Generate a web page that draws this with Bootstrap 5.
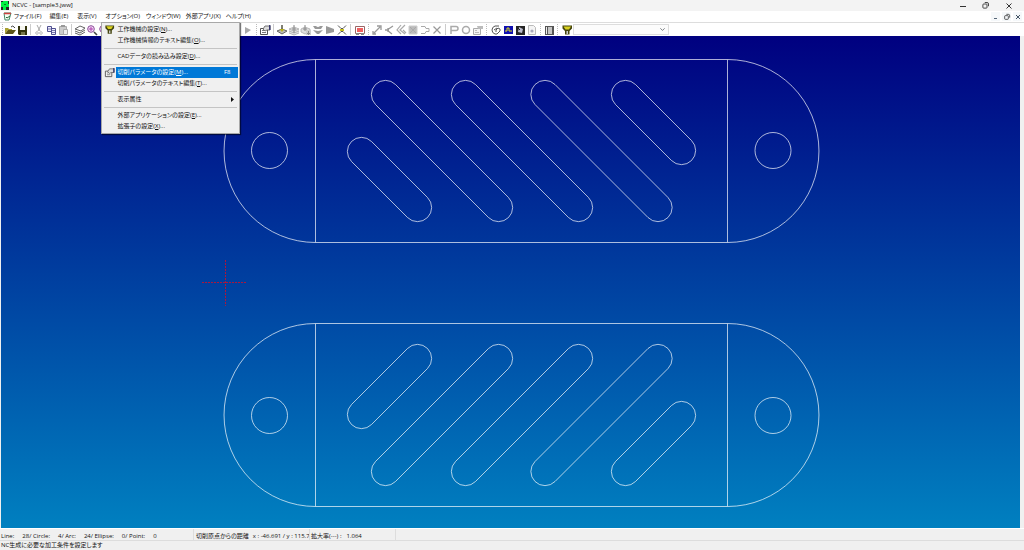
<!DOCTYPE html>
<html lang="ja">
<head>
<meta charset="utf-8">
<meta name="viewport" content="width=device-width, initial-scale=1">
<title>NCVC - [sample3.jww]</title>
<link href="https://cdn.jsdelivr.net/npm/bootstrap@5.3.0/dist/css/bootstrap.min.css" rel="stylesheet">
<style>
body{font-family:"Open Sans","Noto Sans CJK JP",sans-serif;font-size:6px;line-height:11px;color:#111;background:#f0f0f0;font-feature-settings:"palt";white-space:nowrap}
button{background:none;border:0;color:inherit;font:inherit;font-feature-settings:inherit;padding:0}
svg{display:block}
.ico{width:12px;height:12px;flex:none}
.titlebar{background:#f3f3f3;height:11px}
.caption-btn{width:23px;height:11px;display:flex;align-items:center;justify-content:center}
.menubar{background:#fff;height:12px;border-bottom:1px solid #ddd}
.menu-top{padding:0 4px 0 5px;height:11px}
.menu-tight{padding:0 3px 0 2px}
.mdi-btn{width:9px;height:9px;margin-right:2px;display:flex;align-items:center;justify-content:center;background:#f5f8fa}
.toolbar-row{background:#fff;height:13px;color:#999}
.tool{width:12px;height:12px;display:block;flex:none}
.sep,.grip{width:5px;height:11px;flex:none;background:linear-gradient(#ccc,#ccc) 2px 0/1px 100% no-repeat}
.grip{background:repeating-linear-gradient(#bbb 0 1px,#fff0 1px 2px) 2px 0/1px 100% no-repeat}
.first{width:4px}
.wide{width:6px}
.combo{width:96px;height:11px;min-height:0;padding:0 12px 0 2px;border:1px solid #ddd;border-radius:0;font-size:6px;line-height:9px;background-color:#fcfcfc;background-size:7px 5px;background-position:right 2px center}
.app-menu{left:1px;top:11px;width:139px;min-width:0;padding:1px;border:1px solid #a8a8a8;border-radius:0;background:#f0f0f0;box-shadow:1px 1px 1px #0008;font-size:6px;line-height:11px;color:#111;margin:0}
.app-menu .dropdown-item{display:flex;align-items:center;height:11px;padding:0 7px 0 0;color:#111;line-height:11px}
.app-menu .glyph{width:13px;height:11px;flex:none}
.app-menu .caption{flex:1;padding-left:1px;height:11px;display:flex;align-items:center}
.app-menu .chosen{padding-right:0}
.app-menu .chosen .caption{background:#0078d7;color:#fff;padding-right:8px}
.app-menu .dropdown-divider{margin:2px 1px;border-top:1px solid #c4c4c4}
.workarea{padding:0 4px 0 1px;min-height:0}
.drawing{background:linear-gradient(#000080,#0080c0);width:100%;height:100%}
.plate{fill:none;stroke:#fff;stroke-opacity:.68;stroke-width:1}
.status{height:13px;border-top:1px solid #fff;border-bottom:1px solid #ddd}
.status>div{padding-top:2px;line-height:10px;border-right:1px solid #ddd;overflow:hidden}
.pane-count{width:194px;padding-left:1px;gap:8px}
.pane-pos{width:116px;padding-left:2px;gap:4px}
.pane-zoom{width:86px;padding-left:1px;gap:5px}
.message{height:9px;line-height:9px;padding-left:1px}
</style>
</head>
<body>
<svg width="0" height="0" class="position-absolute" aria-hidden="true">
<symbol id="i-open" viewBox="0 0 12 12"><path d="M1 4h3l1 1h3v1H4l-3 4z" fill="#a8a030"/><path d="M4 6h8l-3 4H1z" fill="#5b5418"/><path d="M7 3q2-2 3 0l1 1" fill="none" stroke="#444"/></symbol>
<symbol id="i-save" viewBox="0 0 12 12"><path d="M2 2h9v9H3l-1-1z" fill="#33330c"/><path d="M4 2h5v4H4z" fill="#f6f6f0"/><path d="M5 8h4v3H5z" fill="#77774b"/></symbol>
<symbol id="i-cut" viewBox="0 0 12 12"><path d="M4 1l3 6M8 1L5 7" stroke="#aaa" fill="none"/><circle cx="4" cy="9" r="1.3" fill="none" stroke="#bbb"/><circle cx="8" cy="9" r="1.3" fill="none" stroke="#bbb"/></symbol>
<symbol id="i-copy" viewBox="0 0 12 12"><path d="M2.500 2.500h4v5h-4zM6.500 4.500h4v6h-4z" fill="#eef" stroke="#505090"/><path d="M3 5h3M7 6.500h3M7 8.500h3" stroke="#7777aa"/></symbol>
<symbol id="i-paste" viewBox="0 0 12 12"><path d="M2.500 2.500h7v8h-7z" fill="#ccc" stroke="#aaa"/><path d="M4 1h4v2H4z" fill="#999"/><path d="M6.500 5.500h4v5h-4z" fill="#eee" stroke="#aaa"/></symbol>
<symbol id="i-layers" viewBox="0 0 12 12"><path d="M1 5l5-3 5 2-4 3zM1 7l5 2 5-3M1 9l5 2 5-3" fill="none" stroke="#666"/></symbol>
<symbol id="i-zoom" viewBox="0 0 12 12"><circle cx="5" cy="5" r="3.3" fill="#f5e0f8" stroke="#8a4a98"/><path d="M3 5h4M5 3v4" stroke="#b040b0"/><path d="M8 8l3 3" stroke="#444" stroke-width="1.6"/></symbol>
<symbol id="i-play" viewBox="0 0 12 12"><path d="M3 3l6 3-6 4z" fill="#aaa"/></symbol>
<symbol id="i-prop" viewBox="0 0 12 12"><path d="M1.500 4.500h7v6h-7z" fill="#fff" stroke="#555"/><path d="M3 6.500h2M3 8.500h4" stroke="#777"/><path d="M4 5l2-3h5v4H8L6 7z" fill="#ddd" stroke="#555" stroke-width=".8"/><path d="M10 1h1.500v5H10z" fill="#3a3a70"/></symbol>
<symbol id="i-propg" viewBox="0 0 12 12"><path d="M1.500 4.500h7v6h-7z" fill="#f4f4f4" stroke="#aaa"/><path d="M3 6.500h2M3 8.500h4" stroke="#bbb"/><path d="M5 2h6v3H6z" fill="#bbb"/></symbol>
<symbol id="i-gen" viewBox="0 0 12 12"><path d="M1 7l5-2 5 2-5 3z" fill="#bbb" stroke="#666"/><path d="M6 1v6" stroke="#554" stroke-width="1.500"/><path d="M3.500 5h5L6 8z" fill="#b8b020"/></symbol>
<symbol id="i-geng" viewBox="0 0 12 12"><path d="M1 5l5-2 5 2v4l-5 2-5-2z" fill="#e4e4e4"/><path d="M1 5l5-2 5 2-5 2zM1 7l5 2 5-2M1 9l5 2 5-2" fill="none" stroke="#aaa" stroke-width=".8"/><path d="M6 1v8M4 5h4" stroke="#888"/></symbol>
<symbol id="i-gend" viewBox="0 0 12 12"><path d="M1 5l4-2 5 2v3l-5 2-4-2z" fill="#ddd" stroke="#aaa" stroke-width=".8"/><path d="M5 1v6M3 5h4" stroke="#888"/><path d="M6 6h5v5H6z" fill="#ccc"/><path d="M7 9.500h3M8.500 7v4" stroke="#888"/></symbol>
<symbol id="i-curve" viewBox="0 0 12 12"><path d="M1 2h3q2 2 4 0h3L9 5H3zM1 6l5 1 5-1-4 4H5z" fill="#999"/></symbol>
<symbol id="i-flag" viewBox="0 0 12 12"><path d="M2 2l8 3v3l-8 2z" fill="#999"/></symbol>
<symbol id="i-cross" viewBox="0 0 12 12"><path d="M2 1.500l3 3h2l3-3M2 10.500l3-3h2l3 3" fill="none" stroke="#555"/><path d="M4 5h4v2H4z" fill="#c8c020"/></symbol>
<symbol id="i-mon" viewBox="0 0 12 12"><path d="M1.500 2.500h9v7h-9z" fill="#fff" stroke="#966"/><path d="M3 4h6v4H3z" fill="#f06060"/><path d="M2 9h3v2H2zM7 9h3v2H7z" fill="#888"/></symbol>
<symbol id="i-arrow" viewBox="0 0 12 12"><path d="M3 9l6-6M6 2h4v4M2 7v3h3" fill="none" stroke="#999" stroke-width="1.300"/></symbol>
<symbol id="i-lt" viewBox="0 0 12 12"><path d="M10 2L4 6l5 4M2 6h4M5 4v4" fill="none" stroke="#999" stroke-width="1.300"/></symbol>
<symbol id="i-llt" viewBox="0 0 12 12"><path d="M6 1L2 6l4 4M10 1L5 6l5 4M8 6l3 3" fill="none" stroke="#aaa" stroke-width="1.200"/></symbol>
<symbol id="i-sq" viewBox="0 0 12 12"><path d="M2 2h8v8H2z" fill="#bbb" stroke="#ccc"/><path d="M3 3l6 6M9 3L3 9" stroke="#aaa"/></symbol>
<symbol id="i-loop" viewBox="0 0 12 12"><path d="M2 2.500h4l1 2h3v3H7l-1 2H2" fill="none" stroke="#aaa"/></symbol>
<symbol id="i-x" viewBox="0 0 12 12"><path d="M2.500 2.500l7 7M9.500 2.500l-7 7" stroke="#999" stroke-width="1.200"/></symbol>
<symbol id="i-p" viewBox="0 0 12 12"><path d="M3 10V2.500h5q2 0 2 2t-2 2H3" fill="none" stroke="#aaa" stroke-width="1.500"/></symbol>
<symbol id="i-o" viewBox="0 0 12 12"><circle cx="6" cy="6" r="3.500" fill="none" stroke="#aaa" stroke-width="1.500"/></symbol>
<symbol id="i-swirl" viewBox="0 0 12 12"><path d="M9 2H5Q2 3 2 6t3 4h2l3-3V5L8 4 6 6v2M4 6l3-2" fill="none" stroke="#555"/></symbol>
<symbol id="i-wave" viewBox="0 0 12 12"><path d="M2 2h9v8H2z" fill="#1010b0"/><path d="M3 7h2V4h2v3h3" fill="none" stroke="#dddd20"/></symbol>
<symbol id="i-dark" viewBox="0 0 12 12"><path d="M2 2h9v9H2z" fill="#252525"/><path d="M5 3l4 2-1 4-4-1z" fill="#bbc"/><path d="M4 4l2 2" stroke="#222"/></symbol>
<symbol id="i-doc" viewBox="0 0 12 12"><path d="M2.500 1.500h5l2 2v7h-7z" fill="#f4f4f4" stroke="#bbb"/><circle cx="6" cy="7" r="1.600" fill="#aab"/></symbol>
<symbol id="i-page" viewBox="0 0 12 12"><path d="M2 2h9v9H2z" fill="#555"/><path d="M3 3h1v7H3z" fill="#eee"/><path d="M5 3h4v7H5z" fill="#c4c4c4"/></symbol>
<symbol id="i-tool" viewBox="0 0 12 12"><path d="M1.500 1.500h9.500v3L8.500 7v3.500H4V7L1.500 4.500z" fill="#44440c"/><path d="M2.500 2.500h7.500L8 5.500H4.500z" fill="#d8d020"/><path d="M5.500 7h1.500v3H5.500z" fill="#ccc"/></symbol>
<symbol id="i-restore" viewBox="0 0 12 12"><rect x="2.500" y="4" width="5.500" height="5.500" rx="1" fill="none" stroke="currentColor"/><path d="M5 2h3q2 0 2 2v3" fill="none" stroke="currentColor"/></symbol>
</svg>
<div class="d-flex flex-column vh-100 overflow-hidden">
<header>
<div class="titlebar d-flex align-items-center">
<svg class="flex-shrink-0" width="12" height="11" viewBox="0 0 12 11"><path d="M1 1h8v6H1zM3 7h4v3H3z" fill="#00f040"/><path d="M1 1h2v1H1zM8 1h1v3H8zM1 7h2v3H1zM6 7h3v3H6z" fill="#222"/><path d="M4 4h2v1H4z" fill="#087820"/></svg>
<span class="flex-grow-1">NCVC - [sample3.jww]</span>
<button class="caption-btn" aria-label="最小化"><svg width="8" height="8"><path d="M1 4.500h6" stroke="#333"/></svg></button>
<button class="caption-btn" aria-label="元に戻す"><svg width="9" height="9"><use href="#i-restore"/></svg></button>
<button class="caption-btn me-1" aria-label="閉じる"><svg width="8" height="8" viewBox="0 0 8 8"><path d="M1.500 1.500l5 5M6.500 1.500l-5 5" stroke="#333"/></svg></button>
</div>
<nav class="menubar d-flex align-items-center">
<svg width="12" height="11" class="flex-shrink-0" viewBox="0 0 12 11"><path d="M4 2h7L9 9H5z" fill="#f4fff4" stroke="#486"/><path d="M4 2.500h7" stroke="#d04040" stroke-width="1.500"/><path d="M6 6l1 1 3-2" stroke="#286a38" fill="none"/></svg>
<button class="menu-top menu-tight">ファイル(F)</button>
<button class="menu-top">編集(E)</button>
<button class="menu-top">表示(V)</button>
<div class="dropdown">
<button class="menu-top d-block" aria-expanded="true">オプション(O)</button>
<div class="dropdown-menu app-menu show">
<button class="dropdown-item"><svg class="glyph"><use href="#i-tool"/></svg><span class="caption">工作機械の設定(<u>N</u>)...</span></button>
<button class="dropdown-item"><span class="glyph"></span><span class="caption">工作機械情報のテキスト編集(<u>O</u>)...</span></button>
<hr class="dropdown-divider">
<button class="dropdown-item"><span class="glyph"></span><span class="caption">CADデータの読み込み設定(<u>D</u>)...</span></button>
<hr class="dropdown-divider">
<button class="dropdown-item chosen"><svg class="glyph"><use href="#i-prop"/></svg><span class="caption">切削パラメータの設定(<u>M</u>)...<span class="ms-auto">F8</span></span></button>
<button class="dropdown-item"><span class="glyph"></span><span class="caption">切削パラメータのテキスト編集(<u>T</u>)...</span></button>
<hr class="dropdown-divider">
<button class="dropdown-item pe-1"><span class="glyph"></span><span class="caption">表示属性</span><svg width="3" height="5"><path d="M0 0l3 2.500-3 2.500z" fill="#111"/></svg></button>
<hr class="dropdown-divider">
<button class="dropdown-item"><span class="glyph"></span><span class="caption">外部アプリケーションの設定(<u>E</u>)...</span></button>
<button class="dropdown-item"><span class="glyph"></span><span class="caption">拡張子の設定(<u>X</u>)...</span></button>
</div>
</div>
<button class="menu-top menu-tight">ウィンドウ(W)</button>
<button class="menu-top menu-tight">外部アプリ(X)</button>
<button class="menu-top menu-tight me-auto">ヘルプ(H)</button>
<button class="mdi-btn" aria-label="子ウィンドウを最小化"><svg width="7" height="7"><path d="M2 5.500h3" stroke="#567"/></svg></button>
<button class="mdi-btn" aria-label="子ウィンドウを元に戻す"><svg width="8" height="8"><use href="#i-restore"/></svg></button>
<button class="mdi-btn" aria-label="子ウィンドウを閉じる"><svg width="6" height="6"><path d="M1 1l4 4M5 1l-4 4" stroke="#456"/></svg></button>
</nav>
<div class="toolbar-row d-flex align-items-center" role="toolbar">
<span class="grip first"></span>
<button class="tool" aria-label="開く"><svg class="ico"><use href="#i-open"/></svg></button>
<button class="tool" aria-label="保存"><svg class="ico"><use href="#i-save"/></svg></button>
<span class="sep"></span>
<button class="tool" aria-label="切り取り"><svg class="ico"><use href="#i-cut"/></svg></button>
<button class="tool" aria-label="コピー"><svg class="ico"><use href="#i-copy"/></svg></button>
<button class="tool" aria-label="貼り付け"><svg class="ico"><use href="#i-paste"/></svg></button>
<span class="sep"></span>
<button class="tool" aria-label="レイヤ"><svg class="ico"><use href="#i-layers"/></svg></button>
<button class="tool" aria-label="拡大"><svg class="ico"><use href="#i-zoom"/></svg></button>
<button class="tool" aria-label="縮小"><svg class="ico"><use href="#i-zoom"/></svg></button>
<span class="tool"></span><span class="tool"></span><span class="tool"></span><span class="tool"></span><span class="tool"></span><span class="tool"></span><span class="tool"></span><span class="tool"></span><span class="tool"></span><span class="tool"></span><span class="tool"></span>
<button class="tool" aria-label="実行"><svg class="ico"><use href="#i-play"/></svg></button>
<span class="grip"></span>
<button class="tool" aria-label="切削パラメータ"><svg class="ico"><use href="#i-prop"/></svg></button>
<span class="sep"></span>
<button class="tool" aria-label="NC生成"><svg class="ico"><use href="#i-gen"/></svg></button>
<button class="tool" aria-label="レイヤ生成"><svg class="ico"><use href="#i-geng"/></svg></button>
<button class="tool" aria-label="複数生成"><svg class="ico"><use href="#i-gend"/></svg></button>
<button class="tool" aria-label="曲面"><svg class="ico"><use href="#i-curve"/></svg></button>
<button class="tool" aria-label="旋盤"><svg class="ico"><use href="#i-flag"/></svg></button>
<button class="tool" aria-label="原点"><svg class="ico"><use href="#i-cross"/></svg></button>
<span class="sep wide"></span>
<button class="tool" aria-label="ワーク矩形"><svg class="ico"><use href="#i-mon"/></svg></button>
<span class="grip"></span>
<button class="tool" aria-label="移動"><svg class="ico"><use href="#i-arrow"/></svg></button>
<button class="tool" aria-label="形状"><svg class="ico"><use href="#i-lt"/></svg></button>
<button class="tool" aria-label="輪郭"><svg class="ico"><use href="#i-llt"/></svg></button>
<button class="tool" aria-label="ポケット"><svg class="ico"><use href="#i-sq"/></svg></button>
<button class="tool" aria-label="方向"><svg class="ico"><use href="#i-loop"/></svg></button>
<button class="tool" aria-label="除外"><svg class="ico"><use href="#i-x"/></svg></button>
<span class="sep"></span>
<button class="tool" aria-label="パターン"><svg class="ico"><use href="#i-p"/></svg></button>
<button class="tool" aria-label="円"><svg class="ico"><use href="#i-o"/></svg></button>
<button class="tool" aria-label="設定"><svg class="ico"><use href="#i-propg"/></svg></button>
<span class="grip wide"></span>
<button class="tool" aria-label="エディタ"><svg class="ico"><use href="#i-swirl"/></svg></button>
<button class="tool" aria-label="波形"><svg class="ico"><use href="#i-wave"/></svg></button>
<button class="tool" aria-label="シミュレータ"><svg class="ico"><use href="#i-dark"/></svg></button>
<button class="tool" aria-label="文書"><svg class="ico"><use href="#i-doc"/></svg></button>
<span class="grip"></span>
<button class="tool" aria-label="表示"><svg class="ico"><use href="#i-page"/></svg></button>
<span class="grip wide"></span>
<button class="tool" aria-label="工作機械"><svg class="ico"><use href="#i-tool"/></svg></button>
<select class="form-select combo" aria-label="工作機械の選択"><option></option></select>
</div>
</header>
<main class="workarea flex-grow-1">
<svg class="drawing" viewBox="1 36 1019 492" role="img" aria-label="CAD図面">
<defs>
<g id="plate">
<path d="M315.500 59.500H727.500A91.500 91.500 0 0 1 727.500 242.500H315.500A91.500 91.500 0 0 1 315.500 59.500V242.500M727.500 59.500V242.500"/>
<circle cx="269.500" cy="150.500" r="18"/><circle cx="773" cy="150.500" r="18"/>
<path id="short" d="M371.500 141.500L427.500 197.500A14 14 0 0 1 407.500 217.500L351.500 161.500A14 14 0 0 1 371.500 141.500Z"/>
<use href="#short" x="264" y="-57"/>
<path id="long" d="M395.500 84.500L508.500 197.500A14 14 0 0 1 488.500 217.500L375.500 104.500A14 14 0 0 1 395.500 84.500Z"/>
<use href="#long" x="80"/><use href="#long" x="159.500"/>
</g>
</defs>
<use href="#plate" class="plate"/>
<use href="#plate" class="plate" transform="matrix(1 0 0 -1 0 566)"/>
<path d="M202 282.500H247M225.500 260V306" stroke="#c8102c" stroke-dasharray="2 1" fill="none" stroke-opacity=".85"/>
</svg>
</main>
<footer>
<div class="status d-flex">
<div class="pane-count d-flex"><span>Line:</span><span>28/ Circle:</span><span>4/ Arc:</span><span>24/ Ellipse:</span><span>0/ Point:</span><span>0</span></div>
<div class="pane-pos d-flex"><span>切削原点からの距離</span><span>x : -46.691 / y : 115.7</span></div>
<div class="pane-zoom d-flex"><span>拡大率(---) :</span><span>1.064</span></div>
</div>
<div class="message">NC生成に必要な加工条件を設定します</div>
</footer>
</div>
<script src="https://cdn.jsdelivr.net/npm/bootstrap@5.3.0/dist/js/bootstrap.bundle.min.js"></script>
</body>
</html>
